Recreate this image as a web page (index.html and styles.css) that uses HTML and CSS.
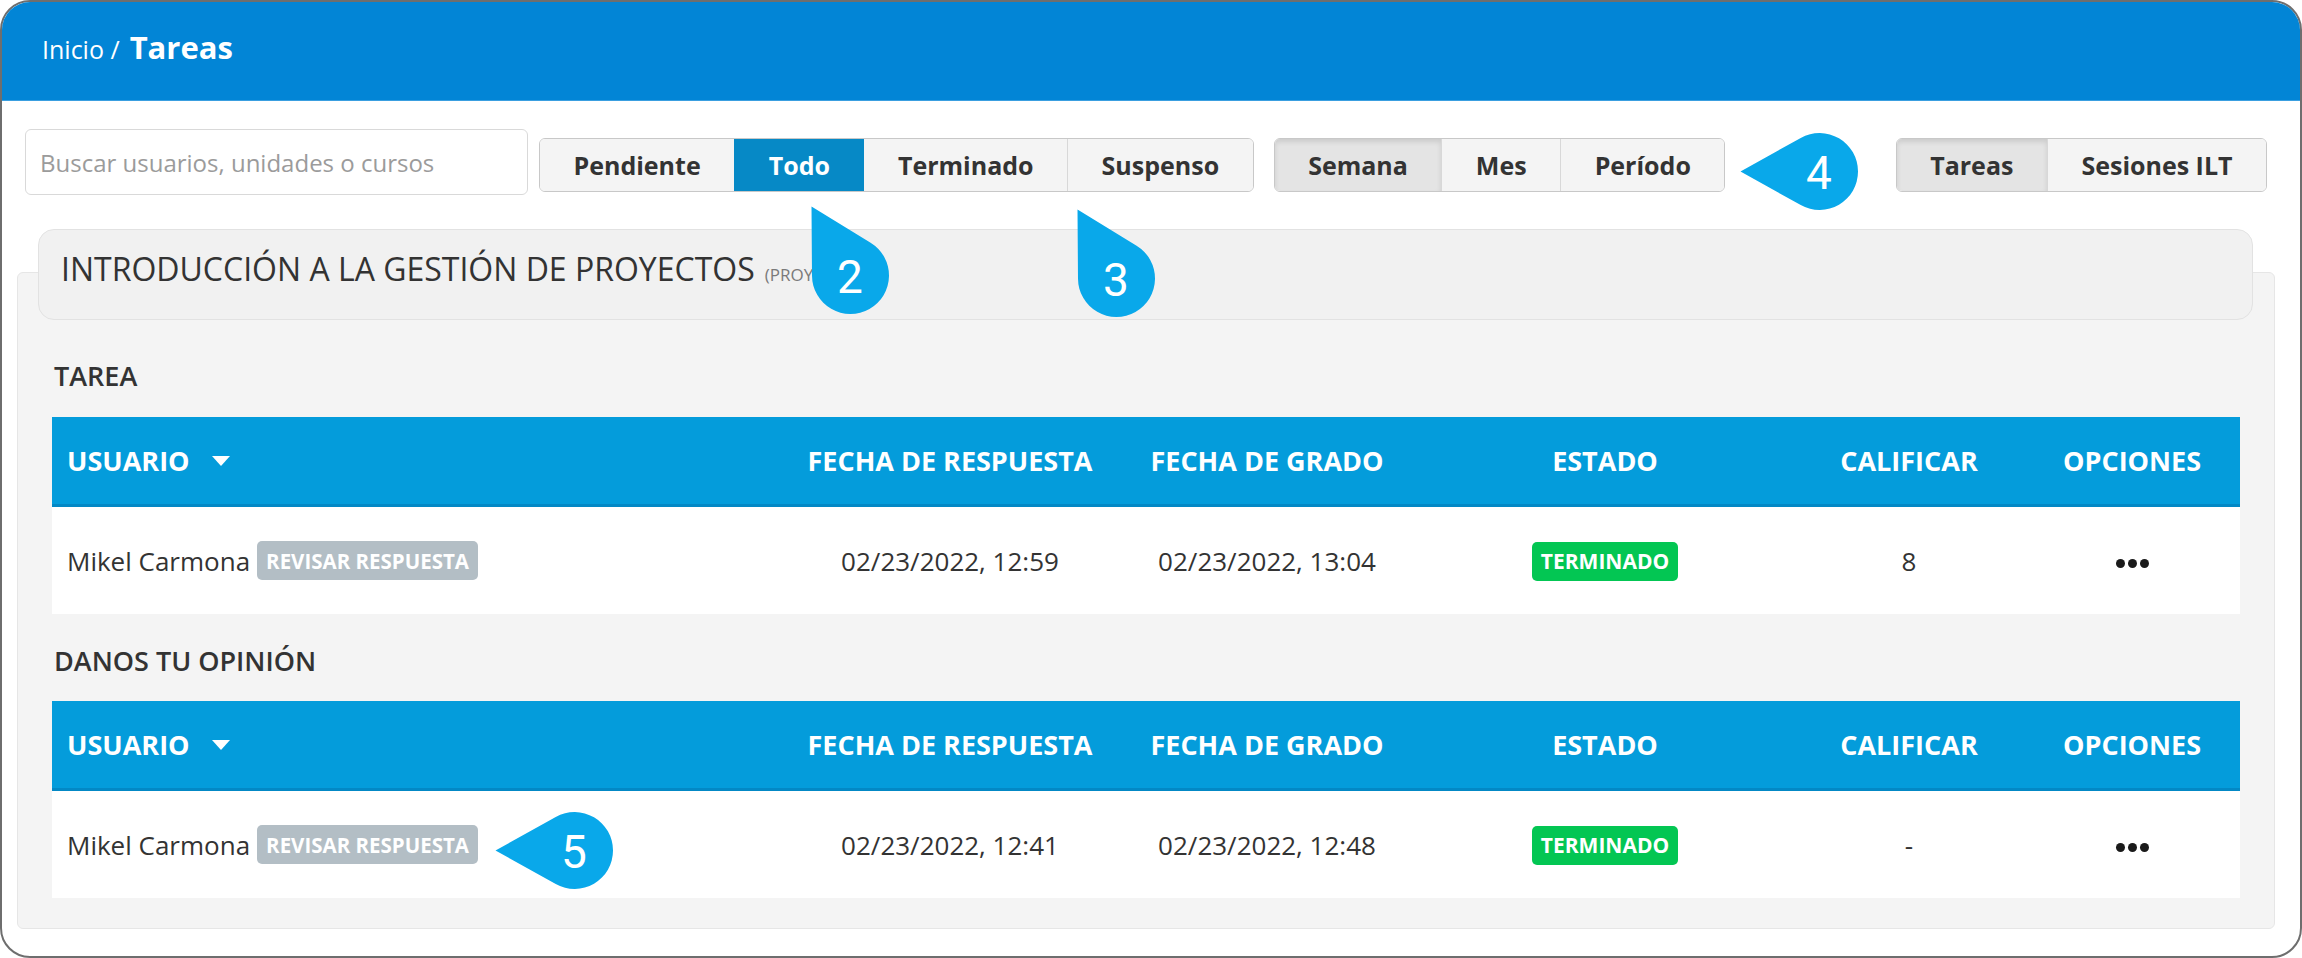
FILE: index.html
```
<!DOCTYPE html>
<html lang="es">
<head>
<meta charset="utf-8">
<title>Tareas</title>
<link rel="stylesheet" href="styles.css">
</head>
<body>
<div class="frame">
  <header class="topbar">
    <div class="crumbs"><span class="crumb">Inicio /</span><span class="crumb-current">Tareas</span></div>
  </header>

  <div class="toolbar">
    <input class="search" type="text" placeholder="Buscar usuarios, unidades o cursos">
    <div class="btn-group">
      <span class="btn">Pendiente</span>
      <span class="btn primary">Todo</span>
      <span class="btn">Terminado</span>
      <span class="btn">Suspenso</span>
    </div>
    <div class="btn-group group-period">
      <span class="btn pressed">Semana</span>
      <span class="btn">Mes</span>
      <span class="btn">Período</span>
    </div>
    <div class="btn-group group-type">
      <span class="btn pressed">Tareas</span>
      <span class="btn">Sesiones ILT</span>
    </div>
  </div>

  <div class="course-card">
    <h2 class="course-title">INTRODUCCIÓN A LA GESTIÓN DE PROYECTOS<small class="course-type">(PROYECTO)</small></h2>
  </div>

  <div class="panel">
    <h3 class="section-title">TAREA</h3>
    <div class="table">
      <div class="thead">
        <div class="c-user">USUARIO<span class="caret"></span></div>
        <div class="c">FECHA DE RESPUESTA</div>
        <div class="c">FECHA DE GRADO</div>
        <div class="c">ESTADO</div>
        <div class="c">CALIFICAR</div>
        <div class="c c-last">OPCIONES</div>
      </div>
      <div class="trow">
        <div class="c-user">Mikel Carmona<span class="badge badge-review">REVISAR RESPUESTA</span></div>
        <div class="c">02/23/2022, 12:59</div>
        <div class="c">02/23/2022, 13:04</div>
        <div class="c"><span class="badge badge-done">TERMINADO</span></div>
        <div class="c">8</div>
        <div class="c c-last"><span class="dots"><i></i><i></i><i></i></span></div>
      </div>
    </div>

    <h3 class="section-title second">DANOS TU OPINIÓN</h3>
    <div class="table">
      <div class="thead">
        <div class="c-user">USUARIO<span class="caret"></span></div>
        <div class="c">FECHA DE RESPUESTA</div>
        <div class="c">FECHA DE GRADO</div>
        <div class="c">ESTADO</div>
        <div class="c">CALIFICAR</div>
        <div class="c c-last">OPCIONES</div>
      </div>
      <div class="trow">
        <div class="c-user">Mikel Carmona<span class="badge badge-review">REVISAR RESPUESTA</span></div>
        <div class="c">02/23/2022, 12:41</div>
        <div class="c">02/23/2022, 12:48</div>
        <div class="c"><span class="badge badge-done">TERMINADO</span></div>
        <div class="c">-</div>
        <div class="c c-last"><span class="dots"><i></i><i></i><i></i></span></div>
      </div>
    </div>
  </div>

  <div class="marker m2">
    <svg class="marker-shape" viewBox="-38.5 -38.5 77 77"><path d="M -39 -69 L 20.09 -32.84 A 38.5 38.5 0 1 1 -38.5 0.28 Z"/></svg>
    <span class="marker-num">2</span>
  </div>
  <div class="marker m3">
    <svg class="marker-shape" viewBox="-38.5 -38.5 77 77"><path d="M -39 -69 L 20.09 -32.84 A 38.5 38.5 0 1 1 -38.5 0.28 Z"/></svg>
    <span class="marker-num">3</span>
  </div>
  <div class="marker m4">
    <svg class="marker-shape" viewBox="-38.5 -38.5 77 77"><path d="M -79 0 L -18.76 -33.62 A 38.5 38.5 0 1 1 -18.76 33.62 Z"/></svg>
    <span class="marker-num">4</span>
  </div>
  <div class="marker m5">
    <svg class="marker-shape" viewBox="-38.5 -38.5 77 77"><path d="M -79 0 L -18.76 -33.62 A 38.5 38.5 0 1 1 -18.76 33.62 Z"/></svg>
    <span class="marker-num">5</span>
  </div>
</div>
</body>
</html>
```

FILE: styles.css
```
* { box-sizing: border-box; }

html, body {
  margin: 0;
  padding: 0;
  background: #ffffff;
}

body {
  font-family: "Open Sans", "Liberation Sans", sans-serif;
  color: #333333;
}

.frame {
  position: relative;
  width: 2302px;
  height: 958px;
  border: 2px solid #6e6e6e;
  border-radius: 30px;
  overflow: hidden;
  background: #ffffff;
}

/* Top bar */
.topbar {
  height: 99px;
  background: #0285d6;
  border-bottom: 1px solid #3a9fe0;
  color: #ffffff;
  display: flex;
  align-items: center;
  padding: 0 0 7px 40px;
}

.crumbs {
  display: flex;
  align-items: baseline;
  line-height: 40px;
}

.crumb {
  font-size: 25px;
  font-weight: 400;
}

.crumb-current {
  font-size: 31px;
  font-weight: 700;
  margin-left: 10px;
}

/* Toolbar */
.toolbar {
  display: flex;
  align-items: flex-start;
  padding: 28px 33px 34px 23px;
}

.search {
  width: 503px;
  height: 66px;
  border: 1px solid #d9d9d9;
  border-radius: 6px;
  padding: 0 14px;
  font-family: "Open Sans", "Liberation Sans", sans-serif;
  font-size: 24px;
  color: #333333;
  background: #ffffff;
  outline: none;
}

.search::placeholder {
  color: #9b9b9b;
}

.btn-group {
  display: flex;
  height: 54px;
  margin-top: 9px;
  margin-left: 11px;
  border: 1px solid #c8c8c8;
  border-radius: 6px;
  overflow: hidden;
}

.group-period {
  margin-left: 20px;
}

.group-type {
  margin-left: auto;
}

.btn {
  display: flex;
  align-items: center;
  padding: 0 33.5px;
  font-size: 25px;
  font-weight: 700;
  color: #333333;
  background: #f4f4f4;
  border-left: 1px solid #d8d8d8;
}

.btn:first-child {
  border-left: none;
}

.btn.primary {
  background: #0689c6;
  color: #ffffff;
  border-left-color: #0689c6;
}

.btn.primary + .btn {
  border-left-color: #0689c6;
}

.btn.pressed {
  background: #e4e4e4;
  box-shadow: inset 0 3px 5px rgba(0, 0, 0, 0.11);
}

/* Course card */
.course-card {
  position: relative;
  z-index: 1;
  height: 91px;
  margin: 0 47px 0 36px;
  background: #f1f1f1;
  border: 1px solid #e2e2e2;
  border-radius: 16px;
  display: flex;
  align-items: center;
  padding: 0 0 6px 22px;
}

.course-title {
  margin: 0;
  font-size: 32px;
  font-weight: 400;
  line-height: 40px;
  color: #333333;
}

.course-type {
  font-size: 17px;
  color: #7a7a7a;
  margin-left: 10px;
}

/* Panel */
.panel {
  margin: -48px 25px 0 15px;
  background: #f4f4f4;
  border: 1px solid #e6e6e6;
  border-radius: 6px;
  padding: 85px 34px 30px 34px;
}

.section-title {
  margin: 0 0 23px 2px;
  font-size: 27px;
  font-weight: 600;
  line-height: 36px;
  color: #333333;
}

.section-title.second {
  margin-top: 29px;
  margin-bottom: 22px;
}

.thead,
.trow {
  display: grid;
  grid-template-columns: 738px 320px 314px 362px 246px 208px;
  align-items: center;
  font-size: 26px;
}

.thead {
  height: 90px;
  background: #049cdb;
  border-bottom: 3px solid #0388c5;
  color: #ffffff;
  font-weight: 700;
  font-size: 27px;
}

.trow {
  height: 107px;
  background: #ffffff;
  color: #333333;
}

.c {
  text-align: center;
  white-space: nowrap;
}

.c-last {
  padding-right: 8px;
}

.c-user {
  display: flex;
  align-items: center;
  padding-left: 15px;
  white-space: nowrap;
}

.caret {
  width: 0;
  height: 0;
  margin-left: 22px;
  border-left: 9px solid transparent;
  border-right: 9px solid transparent;
  border-top: 10px solid #ffffff;
}

.badge {
  display: inline-flex;
  align-items: center;
  height: 39px;
  padding: 0 8px;
  border-radius: 5px;
  color: #ffffff;
  font-size: 20.5px;
  font-weight: 700;
  vertical-align: middle;
}

.badge-review {
  background: #b3bec5;
  margin-left: 7px;
  padding: 0 9px;
}

.badge-done {
  background: #03c653;
  font-size: 21px;
  padding: 0 9px;
}

.dots {
  display: inline-flex;
  gap: 3px;
  vertical-align: middle;
}

.dots i {
  display: block;
  width: 9px;
  height: 9px;
  border-radius: 50%;
  background: #1a1a1a;
}

/* Annotation markers */
.marker {
  position: absolute;
  width: 77px;
  height: 77px;
  z-index: 5;
}

.marker-shape {
  position: absolute;
  left: 0;
  top: 0;
  width: 77px;
  height: 77px;
  overflow: visible;
  fill: #09a8ea;
}

.marker-num {
  position: absolute;
  left: 0;
  top: 0;
  width: 77px;
  height: 77px;
  display: flex;
  align-items: center;
  justify-content: center;
  padding-top: 3px;
  font-family: Roboto, "Liberation Sans", sans-serif;
  font-size: 46px;
  font-weight: 400;
  line-height: 1;
  color: #ffffff;
}

.m2 { left: 809.5px; top: 234.5px; }
.m3 { left: 1075.5px; top: 237.5px; }
.m4 { left: 1778.5px; top: 131px; }
.m5 { left: 533.5px; top: 809.5px; }
```
